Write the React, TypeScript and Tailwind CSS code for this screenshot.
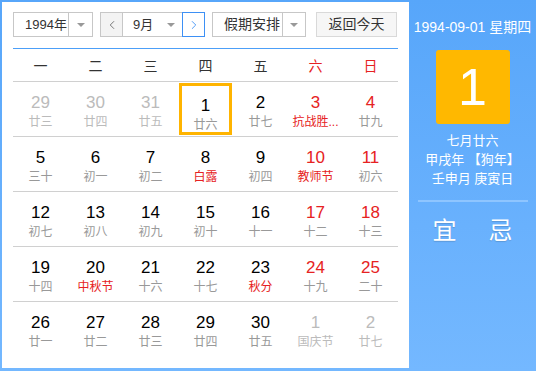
import { ChevronLeft, ChevronRight } from 'lucide-react';

interface Day {
  n: number;
  lunar: string;
  other?: boolean;
  redNum?: boolean;
  redLunar?: boolean;
  selected?: boolean;
}

const weekdays = ['一', '二', '三', '四', '五', '六', '日'];

const weeks: Day[][] = [
  [
    { n: 29, lunar: '廿三', other: true },
    { n: 30, lunar: '廿四', other: true },
    { n: 31, lunar: '廿五', other: true },
    { n: 1, lunar: '廿六', selected: true },
    { n: 2, lunar: '廿七' },
    { n: 3, lunar: '抗战胜...', redNum: true, redLunar: true },
    { n: 4, lunar: '廿九', redNum: true },
  ],
  [
    { n: 5, lunar: '三十' },
    { n: 6, lunar: '初一' },
    { n: 7, lunar: '初二' },
    { n: 8, lunar: '白露', redLunar: true },
    { n: 9, lunar: '初四' },
    { n: 10, lunar: '教师节', redNum: true, redLunar: true },
    { n: 11, lunar: '初六', redNum: true },
  ],
  [
    { n: 12, lunar: '初七' },
    { n: 13, lunar: '初八' },
    { n: 14, lunar: '初九' },
    { n: 15, lunar: '初十' },
    { n: 16, lunar: '十一' },
    { n: 17, lunar: '十二', redNum: true },
    { n: 18, lunar: '十三', redNum: true },
  ],
  [
    { n: 19, lunar: '十四' },
    { n: 20, lunar: '中秋节', redLunar: true },
    { n: 21, lunar: '十六' },
    { n: 22, lunar: '十七' },
    { n: 23, lunar: '秋分', redLunar: true },
    { n: 24, lunar: '十九', redNum: true },
    { n: 25, lunar: '二十', redNum: true },
  ],
  [
    { n: 26, lunar: '廿一' },
    { n: 27, lunar: '廿二' },
    { n: 28, lunar: '廿三' },
    { n: 29, lunar: '廿四' },
    { n: 30, lunar: '廿五' },
    { n: 1, lunar: '国庆节', other: true },
    { n: 2, lunar: '廿七', other: true },
  ],
];

function Caret() {
  return <span className="w-0 h-0 border-x-[4px] border-x-transparent border-t-[4px] border-t-[#999]" />;
}

function DayCell({ d }: { d: Day }) {
  const numColor = d.other ? 'text-[#bbb]' : d.redNum ? 'text-[#e62222]' : 'text-black';
  const lunarColor = d.other ? 'text-[#bbb]' : d.redLunar ? 'text-[#e62222]' : 'text-[#999]';
  return (
    <div className="h-[54px] p-[1px]">
      <div
        className={`h-full flex flex-col items-center pt-[9px] ${d.selected ? 'border-[3px] border-[#ffb400] pt-[6px]' : ''}`}
      >
        <span className={`text-[17px] leading-[22px] ${numColor}`}>{d.n}</span>
        <span className={`text-[12px] leading-[16px] ${lunarColor}`}>{d.lunar}</span>
      </div>
    </div>
  );
}

export default function App() {
  return (
    <div
      className="w-[536px] h-[371px] flex bg-linear-to-b from-[#57a6fa] to-[#74b8ff] pl-[2px] pt-[2px] pb-[3px]"
      style={{ fontFamily: '"Liberation Sans", Arial, "Noto Sans CJK SC", sans-serif' }}
    >
      {/* left: calendar */}
      <div className="w-[407px] h-full bg-white px-[11px] pt-[10px]">
        <div className="flex items-center h-[25px] text-[13px] text-[#333]">
          <div className="w-[80px] h-full flex border border-[#c7c7c7]">
            <span className="flex-1 flex items-center pl-[11px]">1994年</span>
            <span className="w-[24px] flex items-center justify-center border-l border-[#c7c7c7]">
              <Caret />
            </span>
          </div>
          <div className="ml-[7px] w-[105px] h-full flex border border-[#c7c7c7]">
            <span className="w-[22px] flex items-center justify-center bg-[#f3f3f3] border-r border-[#c7c7c7] text-[#666]">
              <ChevronLeft size={14} strokeWidth={1.5} />
            </span>
            <span className="flex-1 flex items-center justify-between pl-[10px] pr-[7px]">
              9月
              <Caret />
            </span>
            <span className="w-[23px] -my-[1px] -mr-[1px] flex items-center justify-center border border-[#3d90f5] text-[#3d90f5] bg-white">
              <ChevronRight size={14} strokeWidth={1.5} />
            </span>
          </div>
          <div className="ml-[7px] w-[94px] h-full flex border border-[#c7c7c7]">
            <span className="flex-1 flex items-center pl-[11px] text-[14px]">假期安排</span>
            <span className="w-[23px] flex items-center justify-center border-l border-[#c7c7c7]">
              <Caret />
            </span>
          </div>
          <button className="ml-[10px] w-[81px] h-full border border-[#d9d9d9] bg-[#f6f6f6] text-[14px] text-[#333]">
            返回今天
          </button>
        </div>

        <div className="mt-[11px] h-[1px] bg-[#4c9ff8]" />

        <div className="grid grid-cols-7 h-[33px] pt-[2px] items-center border-b border-[#d0d0d0] text-[14px]">
          {weekdays.map((w, i) => (
            <span key={w} className={`text-center ${i >= 5 ? 'text-[#e62222]' : 'text-[#333]'}`}>
              {w}
            </span>
          ))}
        </div>

        {weeks.map((week, wi) => (
          <div
            key={wi}
            className={`grid grid-cols-7 ${wi < weeks.length - 1 ? 'border-b border-[#d0d0d0]' : ''}`}
          >
            {week.map((d, di) => (
              <DayCell key={di} d={d} />
            ))}
          </div>
        ))}
      </div>

      {/* right: today panel */}
      <div className="flex-1 flex flex-col items-center text-white">
        <div className="mt-[16px] text-[14px] leading-[18px]">1994-09-01 星期四</div>
        <div className="mt-[14px] w-[74px] h-[74px] rounded-[3px] bg-[#ffb800] flex items-center justify-center text-[52px] leading-none">
          1
        </div>
        <div className="mt-[7px] flex flex-col items-center text-[13px] leading-[19px]">
          <span>七月廿六</span>
          <span>甲戌年 【狗年】</span>
          <span>壬申月 庚寅日</span>
        </div>
        <div className="mt-[12px] w-[110px] h-[2px] bg-[#8ec5ff]" />
        <div className="mt-[14px] flex gap-[32px] text-[24px] leading-[30px] [text-shadow:0_1px_1px_rgba(0,0,0,0.15)]">
          <span>宜</span>
          <span>忌</span>
        </div>
      </div>
    </div>
  );
}
